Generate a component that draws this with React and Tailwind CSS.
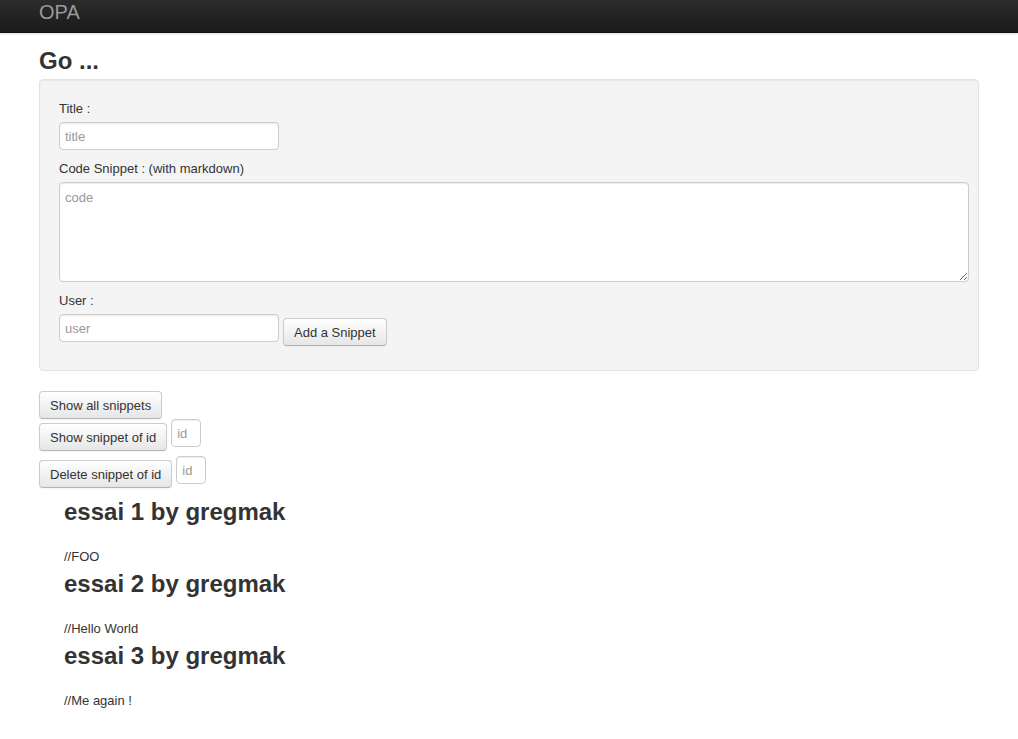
import React from 'react'

const btn =
  'h-[28px] px-[10px] pt-[1px] text-[13px] leading-[18px] text-[#333] rounded-[4px] border border-[#ccc] border-b-[#b3b3b3] bg-gradient-to-b from-white to-[#e6e6e6] shadow-[inset_0_1px_0_rgba(255,255,255,0.2),0_1px_2px_rgba(0,0,0,0.05)] whitespace-nowrap'

const input =
  'h-[28px] px-[5px] text-[13px] text-[#555] placeholder-[#999] bg-white border border-[#ccc] rounded-[4px] shadow-[inset_0_1px_1px_rgba(0,0,0,0.075)] outline-none'

const SNIPPETS = [
  { title: 'essai 1', user: 'gregmak', code: '//FOO' },
  { title: 'essai 2', user: 'gregmak', code: '//Hello World' },
  { title: 'essai 3', user: 'gregmak', code: '//Me again !' },
]

export default function App() {
  return (
    <div
      className="min-h-screen bg-white text-[#333]"
      style={{ fontFamily: '"Liberation Sans", Arial, sans-serif' }}
    >
      {/* Navbar */}
      <div className="h-[33px] bg-gradient-to-b from-[#2c2c2c] to-[#1a1a1a] border-b border-[#111] shadow-[0_1px_2px_rgba(0,0,0,0.15)]">
        <div className="w-[940px] mx-auto pt-[2px]">
          <span className="text-[20px] leading-[20px] text-[#999]">OPA</span>
        </div>
      </div>

      <div className="w-[940px] mx-auto">
        <h3 className="text-[24px] font-bold leading-[28px] pt-[14px] mb-[4px]">Go ...</h3>

        {/* Form well */}
        <div className="h-[292px] bg-[#f4f4f4] border border-[#e3e3e3] rounded-[4px] px-[19px] pt-[20px] shadow-[inset_0_1px_1px_rgba(0,0,0,0.05)]">
          <label className="block text-[13px] leading-[18px] mb-[4px]">Title :</label>
          <input className={`${input} w-[220px] mb-[10px] block`} placeholder="title" />

          <label className="block text-[13px] leading-[18px] mb-[4px]">Code Snippet : (with markdown)</label>
          <textarea
            className={`${input} h-[100px] w-[910px] block mb-[10px] pt-[5px] resize`}
            placeholder="code"
          />

          <label className="block text-[13px] leading-[18px] mb-[4px]">User :</label>
          <div className="flex items-start gap-[4px]">
            <input className={`${input} w-[220px]`} placeholder="user" />
            <button className={`${btn} mt-[4px]`}>Add a Snippet</button>
          </div>
        </div>

        {/* Actions */}
        <div className="mt-[20px]">
          <button className={btn}>Show all snippets</button>
          <div className="flex items-start gap-[4px] mb-[5px]">
            <button className={`${btn} mt-[4px]`}>Show snippet of id</button>
            <input className={`${input} w-[30px]`} placeholder="id" />
          </div>
          <div className="flex items-start gap-[4px]">
            <button className={`${btn} mt-[4px]`}>Delete snippet of id</button>
            <input className={`${input} w-[30px]`} placeholder="id" />
          </div>
        </div>

        {/* Snippets */}
        <div className="pl-[25px] mt-[6px]">
          {SNIPPETS.map(s => (
            <div key={s.title}>
              <h2 className="text-[24px] font-bold leading-[36px]">
                {s.title} by {s.user}
              </h2>
              <p className="text-[13px] leading-[18px] mt-[18px]">{s.code}</p>
            </div>
          ))}
        </div>
      </div>
    </div>
  )
}
